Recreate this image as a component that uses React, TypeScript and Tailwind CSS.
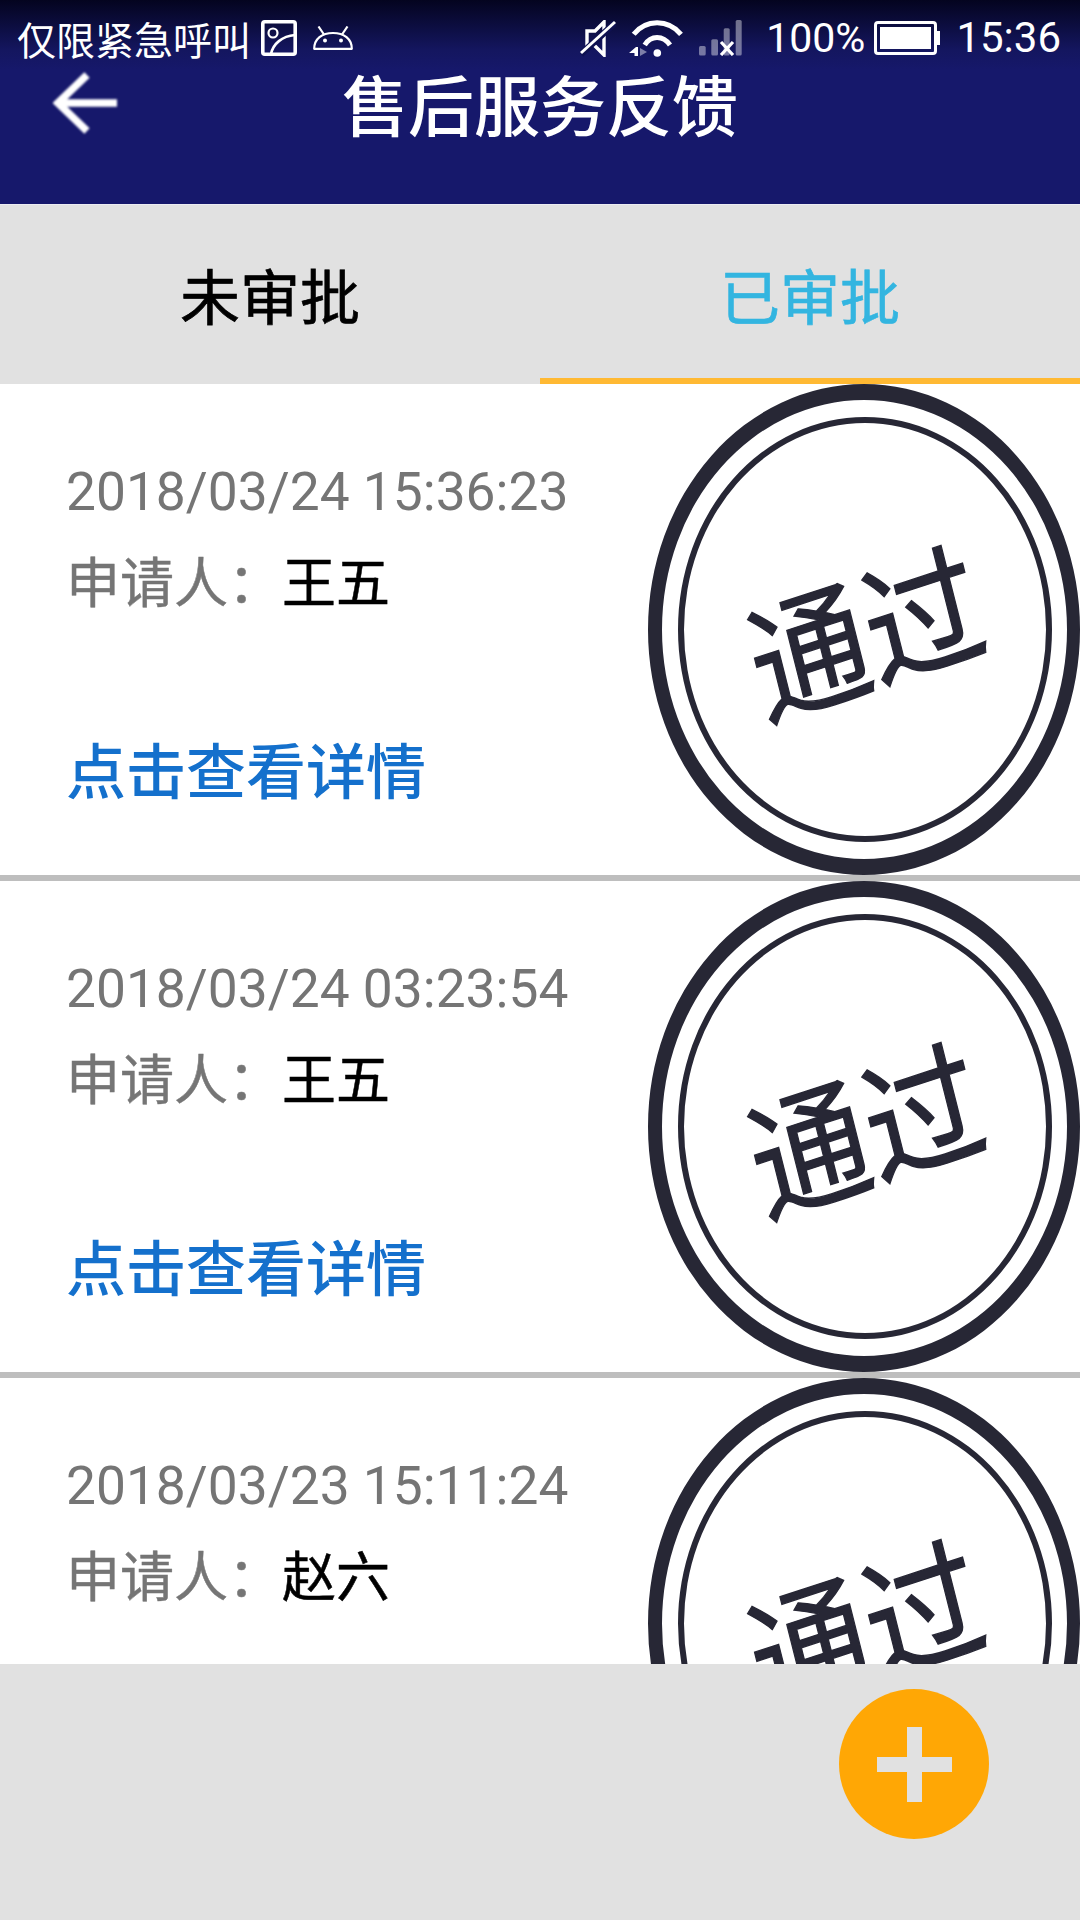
import React from "react";

const cjk = "font-['Noto_Sans_CJK_SC',sans-serif]";

function ImageIcon() {
  return (
    <svg width="36" height="36" viewBox="0 0 36 36" fill="none" stroke="#fff">
      <rect x="1.8" y="1.8" width="32.4" height="32.4" rx="2" strokeWidth="3.6" />
      <circle cx="12" cy="13" r="4.5" strokeWidth="2.2" />
      <path d="M10 34 C12 24 21 16 34 15" strokeWidth="2.6" />
    </svg>
  );
}

function AndroidIcon() {
  return (
    <svg width="40" height="24" viewBox="0 0 40 24" fill="none" stroke="#fff" strokeWidth="2.2">
      <path d="M1.2 22.8 C1.2 13 9 7 20 7 C31 7 38.8 13 38.8 22.8 Z" strokeLinejoin="round" />
      <path d="M5.5 0.5 L11 8.5 M34.5 0.5 L29 8.5" />
      <circle cx="12" cy="14.5" r="2" fill="#fff" stroke="none" />
      <circle cx="28" cy="14.5" r="2" fill="#fff" stroke="none" />
    </svg>
  );
}

function MuteIcon() {
  return (
    <svg width="36" height="37" viewBox="0 0 36 37" fill="none" stroke="#fff">
      <path d="M24 2 L15 11 L7 11 L7 25 L14 25 L24 35 Z" strokeWidth="3.4" strokeLinejoin="miter" />
      <path d="M1 34 L35 3" stroke="#0f1150" strokeWidth="6.5" />
      <path d="M1 33 L35 2" strokeWidth="3" />
    </svg>
  );
}

function WifiIcon() {
  return (
    <svg width="54" height="37" viewBox="0 0 54 37" fill="none">
      <path d="M4.7 14.3 C17 -1 39 -1 52 14.3" stroke="#fff" strokeWidth="5" />
      <path d="M15.7 25 C22 15 34 15 41 25" stroke="#fff" strokeWidth="5" />
      <circle cx="28.3" cy="33" r="3.8" fill="#fff" />
      <path d="M0 33 L7 27 L9 27 L9 36 L5.5 36 L5.5 33 Z" fill="#fff" />
      <path d="M11 28 L18 32 L11 36 Z" fill="#fff" fillOpacity="0.45" />
    </svg>
  );
}

function SignalIcon() {
  return (
    <svg width="43" height="36" viewBox="0 0 43 36" fill="none">
      <rect x="0" y="26" width="6.7" height="9.5" rx="1.5" fill="#fff" fillOpacity="0.42" />
      <rect x="12.3" y="19.3" width="6.7" height="16.2" rx="1.5" fill="#fff" fillOpacity="0.42" />
      <rect x="24.7" y="8.3" width="6" height="27.2" rx="1.5" fill="#fff" fillOpacity="0.42" />
      <rect x="36.7" y="0" width="6" height="35.5" rx="1.5" fill="#fff" fillOpacity="0.42" />
      <path d="M22 22 L34 35 M34 22 L22 35" stroke="#fff" strokeWidth="3.2" />
    </svg>
  );
}

function BatteryIcon() {
  return (
    <svg width="66" height="34" viewBox="0 0 66 34" fill="none">
      <rect x="1.5" y="1.5" width="60" height="31" rx="2.5" stroke="#fff" strokeWidth="3" />
      <rect x="6" y="6" width="51" height="22" fill="#fff" />
      <rect x="63" y="10" width="3" height="14" fill="#fff" />
    </svg>
  );
}

function BackArrow() {
  return (
    <svg width="64" height="62" viewBox="0 0 64 62" fill="none" stroke="#fff" strokeWidth="7.5" className="blur-[1px]">
      <path d="M64 31 L4 31" />
      <path d="M34 3 L5 31 L34 59" />
    </svg>
  );
}

function Stamp() {
  return (
    <div className="w-[432px] h-[491px] shrink-0 rounded-[50%] border-l-[14px] border-r-[13px] border-y-[16px] border-[#272735] flex items-center justify-center">
      <div className="w-[374px] h-[425px] shrink-0 rounded-[50%] border-[6px] border-[#272735] flex items-center justify-center">
        <span className="inline-block scale-y-[1.137] mb-[6px]">
          <span className={`${cjk} inline-block [-webkit-text-stroke:1.2px] text-[118px] leading-none text-[#272735] -rotate-[16deg] whitespace-nowrap`}>通过</span>
        </span>
      </div>
    </div>
  );
}

const rows = [
  { time: "2018/03/24 15:36:23", name: "王五" },
  { time: "2018/03/24 03:23:54", name: "王五" },
  { time: "2018/03/23 15:11:24", name: "赵六" },
];

export default function App() {
  return (
    <div className={`w-[1080px] h-[1920px] overflow-hidden bg-[#e1e1e1] flex flex-col ${cjk}`}>
      <header className="h-[205px] shrink-0 flex flex-col border-b border-[#ececf2] bg-[linear-gradient(to_bottom,#04041f_0px,#14165f_50px,#16186b_70px,#16186b_100%)]">
        <div className="h-[62px] pt-[14px] flex items-center text-white">
          <span className={`ml-[17px] text-[39px] leading-none ${cjk}`}>仅限紧急呼叫</span>
          <span className="ml-[10px] flex"><ImageIcon /></span>
          <span className="ml-[16px] flex"><AndroidIcon /></span>
          <span className="ml-auto flex"><MuteIcon /></span>
          <span className="ml-[13px] flex"><WifiIcon /></span>
          <span className="ml-[16px] flex"><SignalIcon /></span>
          <span className="ml-[24px] font-['Roboto',sans-serif] text-[41px] leading-none">100%</span>
          <span className="ml-[9px] flex"><BatteryIcon /></span>
          <span className="ml-[16px] mr-[19px] font-['Roboto',sans-serif] text-[42px] leading-none">15:36</span>
        </div>
        <div className="h-[79px] grid grid-cols-[1fr_auto_1fr] items-center">
          <div className="pl-[53px] pt-[3px] flex"><BackArrow /></div>
          <h1 className="text-[66px] leading-none font-medium text-white">售后服务反馈</h1>
          <div />
        </div>
      </header>

      <nav className="h-[179px] shrink-0 grid grid-cols-2 bg-[#e1e1e1] text-[60px] [-webkit-text-stroke:0.7px] leading-none">
        <div className="pt-[5px] border-b-[6px] border-transparent flex items-center justify-center text-black">未审批</div>
        <div className="pt-[5px] border-b-[6px] border-[#ffb933] flex items-center justify-center text-[#33b5e0]">已审批</div>
      </nav>

      <main className="h-[1280px] shrink-0 overflow-hidden flex flex-col">
        {rows.map((r, i) => (
          <div key={i} className="h-[497px] shrink-0 bg-white border-b-[6px] border-[#bebebe] flex justify-between">
            <div className="pl-[66px] pt-[78px] flex flex-col">
              <div className="font-['Roboto',sans-serif] text-[53.3px] leading-[60px] text-[#757575]">{r.time}</div>
              <div className="mt-[28px] text-[54px] leading-[60px] [-webkit-text-stroke:0.5px] text-[#757575]">
                申请人：<span className="text-black">{r.name}</span>
              </div>
              <div className="mt-[123px] text-[60px] leading-[70px] font-medium text-[#1470cc]">点击查看详情</div>
            </div>
            <Stamp />
          </div>
        ))}
      </main>

      <footer className="flex-1 bg-[#e1e1e1] flex justify-end pt-[25px] pr-[91px]">
        <button className="relative w-[150px] h-[150px] rounded-full bg-[#ffa705] flex items-center justify-center">
          <span className="w-[75px] h-[15px] bg-[#e1e1e1]" />
          <span className="absolute w-[15px] h-[75px] bg-[#e1e1e1]" />
        </button>
      </footer>
    </div>
  );
}
